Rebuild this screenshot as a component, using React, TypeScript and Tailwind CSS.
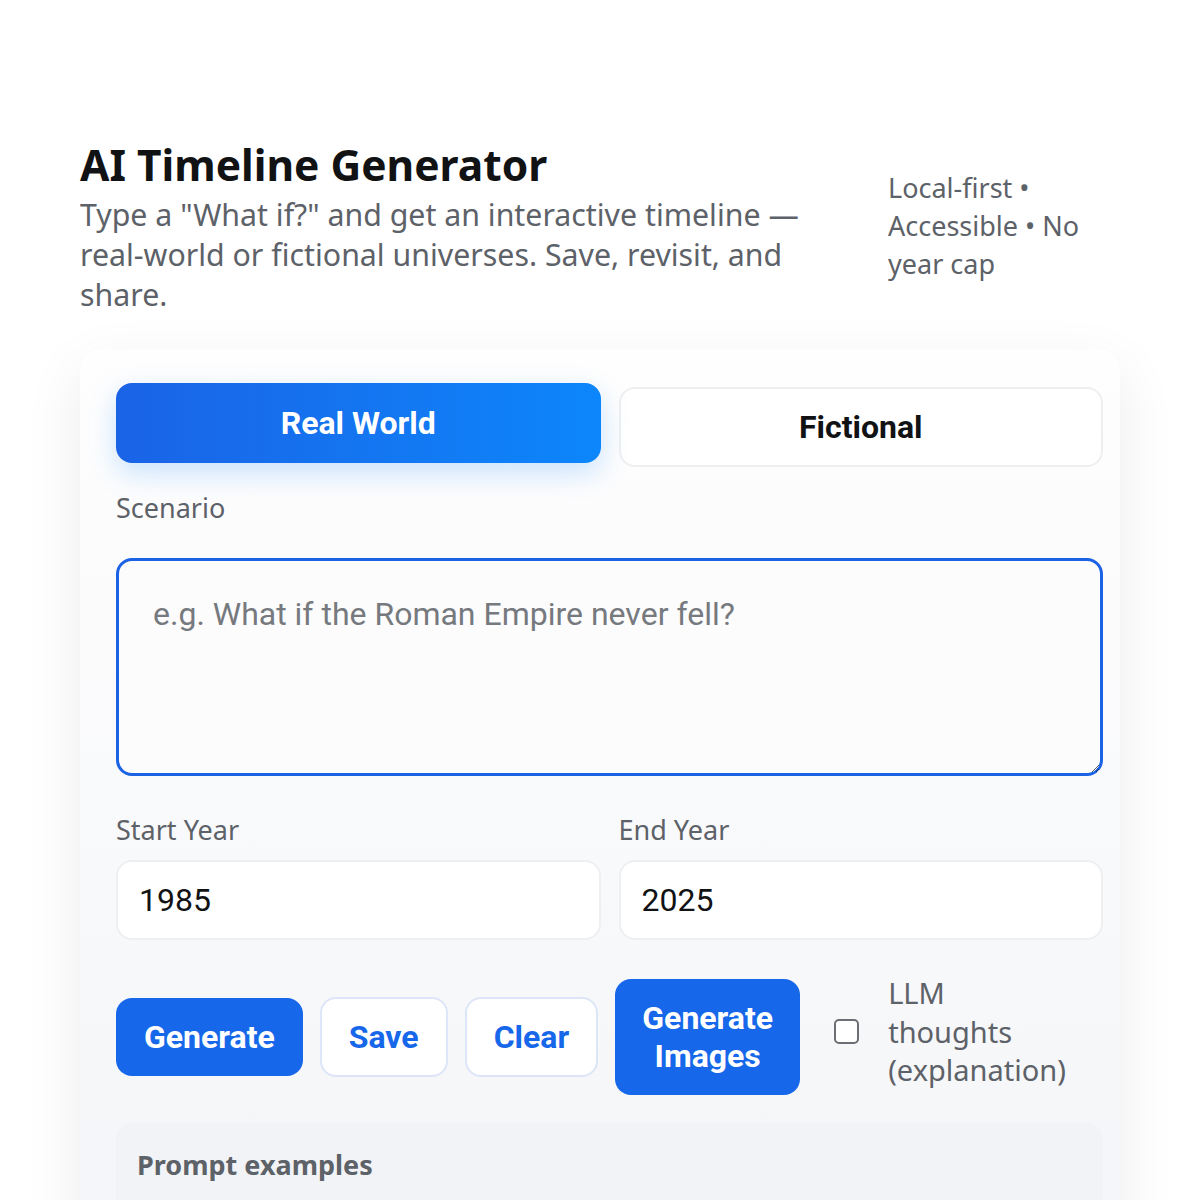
import React from "react";

export default function App() {
  return (
    <div className="min-h-[1200px] bg-white" style={{ fontFamily: '"Noto Sans", "Open Sans", sans-serif' }}>
      <div className="mx-[80px] w-[1040px] pt-[137px]">
        <header className="flex items-center gap-[40px]">
          <div className="flex-1">
            <h1 className="text-[42.5px] leading-[56px] font-bold text-[#111214]">AI Timeline Generator</h1>
            <p className="mt-[2px] text-[30.3px] leading-[40px] text-[#5d6168]">
              Type a "What if?" and get an interactive timeline — real-world or fictional universes. Save, revisit, and share.
            </p>
          </div>
          <div className="w-[232px] text-[27px] leading-[38px] text-[#5d6168]">
            Local-first • Accessible • No year cap
          </div>
        </header>

        <section className="mt-[34px] rounded-[22px] bg-gradient-to-b from-[#fefefe] to-[#f4f5f8] pl-[36px] pr-[17px] pt-[38px] pb-[40px] shadow-[0_20px_60px_rgba(15,23,42,0.08)]">
          <div className="grid grid-cols-2 gap-[18px]" style={{ fontFamily: 'Roboto, sans-serif' }}>
            <button className="h-[80px] -translate-y-[4px] rounded-[16px] bg-gradient-to-r from-[#1a63e6] to-[#0c86fb] text-[32px] font-bold text-white shadow-[0_10px_28px_rgba(12,134,251,0.22)]">
              Real World
            </button>
            <button className="h-[80px] rounded-[16px] border-2 border-[#eeeff1] bg-white text-[32px] font-bold text-[#111214]">
              Fictional
            </button>
          </div>

          <label className="mt-[22px] block text-[27px] leading-[38px] text-[#5d6168]">Scenario</label>
          <textarea
            className="mt-[31px] block h-[218px] w-full resize-y rounded-[16px] border-[3px] border-[#1b62e4] bg-[#fcfcfd] px-[34px] pt-[32px] text-[32px] leading-[42px] text-[#111] outline-none placeholder:text-[#76797d]"
            style={{ fontFamily: 'Roboto, sans-serif' }}
            placeholder="e.g. What if the Roman Empire never fell?"
          />

          <div className="mt-[35px] grid grid-cols-2 gap-[18px]">
            <div>
              <label className="block text-[27px] leading-[38px] text-[#5d6168]">Start Year</label>
              <input
                className="mt-[11px] block h-[80px] w-full rounded-[16px] border-2 border-[#eeeff1] bg-white px-[21px] text-[32px] text-[#111214] outline-none"
                style={{ fontFamily: 'Roboto, sans-serif' }}
                defaultValue="1985"
              />
            </div>
            <div>
              <label className="block text-[27px] leading-[38px] text-[#5d6168]">End Year</label>
              <input
                className="mt-[11px] block h-[80px] w-full rounded-[16px] border-2 border-[#eeeff1] bg-white px-[21px] text-[32px] text-[#111214] outline-none"
                style={{ fontFamily: 'Roboto, sans-serif' }}
                defaultValue="2025"
              />
            </div>
          </div>

          <div className="mt-[39px] flex items-center">
            <button className="whitespace-nowrap rounded-[16px] bg-[#1767ea] px-[28px] py-[20px] text-[32px] leading-[38px] font-bold text-white" style={{ fontFamily: 'Roboto, sans-serif' }}>
              Generate
            </button>
            <button className="ml-[17px] whitespace-nowrap rounded-[16px] border-2 border-[#dce6f8] bg-white px-[27px] py-[19px] text-[32px] leading-[38px] font-bold text-[#1767ea]" style={{ fontFamily: 'Roboto, sans-serif' }}>
              Save
            </button>
            <button className="ml-[17px] whitespace-nowrap rounded-[16px] border-2 border-[#dce6f8] bg-white px-[27px] py-[19px] text-[32px] leading-[38px] font-bold text-[#1767ea]" style={{ fontFamily: 'Roboto, sans-serif' }}>
              Clear
            </button>
            <button className="ml-[17px] w-[185px] rounded-[16px] bg-[#1767ea] px-[20px] py-[20px] text-[32px] leading-[38px] font-bold text-white" style={{ fontFamily: 'Roboto, sans-serif' }}>
              Generate Images
            </button>
            <label className="-mt-[10px] ml-[34px] flex items-center gap-[29px]">
              <span className="-mt-[2px] block h-[25px] w-[25px] shrink-0 rounded-[5px] border-2 border-[#6b6e72] bg-white" />
              <span className="w-[180px] text-[29px] leading-[38.5px] text-[#5d6168]">LLM thoughts (explanation)</span>
            </label>
          </div>

          <div className="mt-[28px] rounded-[16px] bg-[#f1f3f6] px-[21px] pt-[23px] pb-[60px]">
            <div className="text-[27px] leading-[38px] font-bold text-[#5d6168]">Prompt examples</div>
          </div>
        </section>
      </div>
    </div>
  );
}
